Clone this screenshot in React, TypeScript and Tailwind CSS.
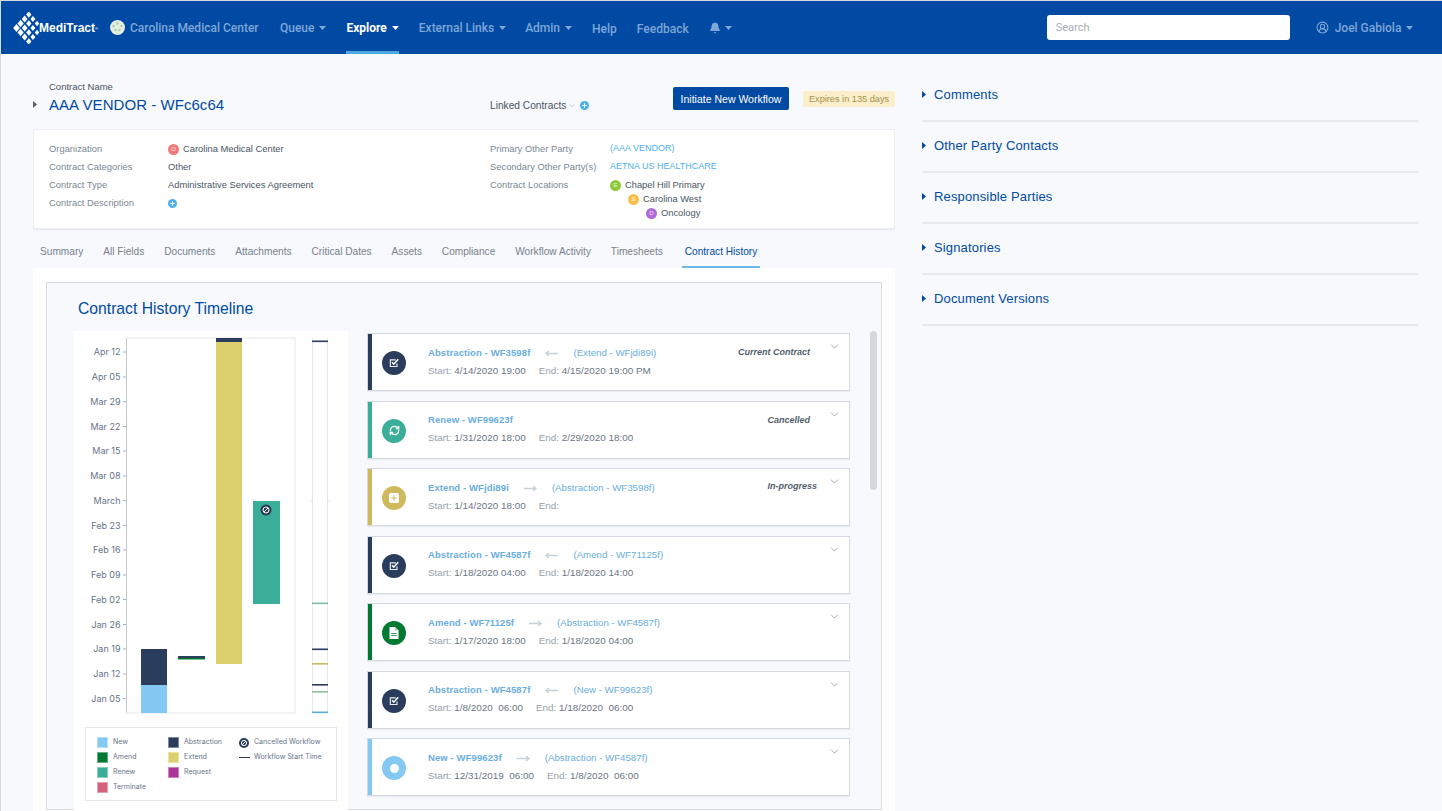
import React from 'react';
import { ChevronDown, Bell, CircleUserRound, RefreshCw, Plus } from 'lucide-react';

const Caret = ({ className = 'text-[#7ea6d8]' }: { className?: string }) => (
  <svg width="7" height="4" viewBox="0 0 7 4" className={className}>
    <path d="M0 0h7L3.5 4z" fill="currentColor" />
  </svg>
);

const SideCaret = ({ className = 'text-[#004aa3]' }: { className?: string }) => (
  <svg width="4" height="7" viewBox="0 0 4 7" className={className}>
    <path d="M0 0l4 3.5L0 7z" fill="currentColor" />
  </svg>
);

const Logo = () => {
  // diamond lattice of the MediTract mark
  const cells: [number, number][] = [
    [0, 0], [1, 0], [2, 0], [3, 0], [0, 1], [1, 1], [2, 1], [3, 1], [0, 2], [1, 2], [2, 2], [3, 2], [0, 3], [1, 3], [2, 3],
  ];
  return (
    <svg width="26" height="32" viewBox="0 0 26 32" className="shrink-0">
      {cells.map(([u, v], i) => {
        const x = 3.5 + (u + v) * 4.1;
        const y = 16 + (u - v) * 4.5;
        const r = 3.9 - (u + v) * 0.25;
        return <path key={i} d={`M${x} ${y - r}L${x + r * 0.85} ${y}L${x} ${y + r}L${x - r * 0.85} ${y}z`} fill="#fff" />;
      })}
    </svg>
  );
};

const CheckIcon = () => (
  <svg width="11" height="10" viewBox="0 0 13 12">
    <path d="M9.5 6.5V10.2H1.5V2.2H8" fill="none" stroke="#e8ecf2" strokeWidth="1.4" />
    <path d="M3.6 5.2L5.6 7.4L11 1.5" fill="none" stroke="#fff" strokeWidth="1.9" />
  </svg>
);

const DocIcon = () => (
  <svg width="10" height="12" viewBox="0 0 10 12">
    <path d="M0.5 0H6L9.5 3.5V12H0.5z" fill="#fff" />
    <path d="M6 0V3.5H9.5" fill="#a7d3b6" />
    <path d="M2.2 6.5H7.8M2.2 8.5H7.8" stroke="#3c9a60" strokeWidth="1" />
  </svg>
);

const NavItem = ({ label, active, caret = true, className = '' }: { label: string; active?: boolean; caret?: boolean; className?: string }) => (
  <div className={`relative h-full flex items-center gap-[5px] ${active ? 'text-white font-bold' : 'text-[#7ea6d8] font-medium'} ${className}`}>
    <span>{label}</span>
    {caret && <Caret className={active ? 'text-white' : 'text-[#7ea6d8]'} />}
    {active && <div className="absolute left-0 right-0 bottom-0 h-[3px] bg-[#4ea8e0]" />}
  </div>
);

const Badge = ({ letter, color }: { letter: string; color: string }) => (
  <span className={`w-[11px] h-[11px] rounded-full inline-flex items-center justify-center text-[6px] text-white/80 shrink-0 ${color}`}>{letter}</span>
);

const PlusDot = () => (
  <span className="w-[9px] h-[9px] rounded-full bg-[#4eb0ea] inline-flex items-center justify-center shrink-0">
    <Plus size={7} strokeWidth={3} className="text-white" />
  </span>
);

const ticks: [string, number][] = [
  ['Apr 12', 352], ['Apr 05', 377], ['Mar 29', 401.7], ['Mar 22', 426.5], ['Mar 15', 451], ['Mar 08', 476], ['March', 500.7],
  ['Feb 23', 525.5], ['Feb 16', 550], ['Feb 09', 575], ['Feb 02', 599.5], ['Jan 26', 624.5], ['Jan 19', 649], ['Jan 12', 674], ['Jan 05', 698.5],
];

const miniLines: [number, string][] = [
  [341.5, '#2a3d5c'], [603.5, '#7fbf9f'], [649.5, '#2a3d5c'], [664, '#d2bc62'], [685, '#2a3d5c'], [692, '#8cc49a'], [712.5, '#4eb0e0'],
];

const Chart = () => {
  const ox = 74;
  const oy = 331;
  return (
    <svg width="274" height="390" viewBox={`${ox} ${oy} 274 390`} className="block">
      <path d="M126.5 338V713" stroke="#c5c8ce" strokeWidth="1" />
      <path d="M126 338H295V713H126" fill="none" stroke="#e6e8ec" strokeWidth="1" />
      {ticks.map(([t, y]) => (
        <g key={t}>
          <path d={`M123 ${y}H126`} stroke="#aab0ba" />
          <text x="120.5" y={y + 3.3} textAnchor="end" fontSize="9" fill="#68748a" fontFamily="Inter, sans-serif">{t}</text>
        </g>
      ))}
      <rect x="141" y="685" width="26" height="28" fill="#83c9f4" />
      <rect x="141" y="649" width="26" height="36" fill="#2a3d5c" />
      <rect x="178" y="656" width="27" height="2" fill="#2a3d5c" />
      <rect x="178" y="658" width="27" height="1.5" fill="#007a33" />
      <rect x="216" y="338" width="26" height="326" fill="#dccf6e" />
      <rect x="216" y="338" width="26" height="4" fill="#2a3d5c" />
      <rect x="253" y="501" width="27" height="103" fill="#3aae98" />
      <circle cx="266" cy="510" r="5.5" fill="#2a3d5c" />
      <circle cx="266" cy="510" r="3" fill="none" stroke="#fff" strokeWidth="1" />
      <path d="M264 512L268 508" stroke="#fff" strokeWidth="1" />
      <path d="M312.5 338V713M327.5 338V713" stroke="#e6e8ec" />
      {miniLines.map(([y, c]) => (
        <rect key={y} x="312" y={y - 1} width="16" height="1.6" fill={c} />
      ))}
      <path d="M312 500.5V502M328 500.5V502" stroke="#c5c8ce" />
    </svg>
  );
};

const Swatch = ({ color, label }: { color: string; label: string }) => (
  <div className="flex items-center gap-[5px] h-[15px]">
    <span className={`w-[11px] h-[11px] border border-white/40 ${color}`} />
    <span>{label}</span>
  </div>
);

const Legend = () => (
  <div className="mx-[11px] mt-[6px] h-[74px] bg-white border border-[#e3e6ea] pl-[11px] pt-[7px] flex text-[7px] text-[#68748a] font-['Inter',sans-serif]">
    <div className="w-[71px]">
      <Swatch color="bg-[#83c9f4]" label="New" />
      <Swatch color="bg-[#007a33]" label="Amend" />
      <Swatch color="bg-[#3aae98]" label="Renew" />
      <Swatch color="bg-[#d2637a]" label="Terminate" />
    </div>
    <div className="w-[71px]">
      <Swatch color="bg-[#2a3d5c]" label="Abstraction" />
      <Swatch color="bg-[#dccf6e]" label="Extend" />
      <Swatch color="bg-[#ae3398]" label="Request" />
    </div>
    <div>
      <div className="flex items-center gap-[5px] h-[15px]">
        <svg width="10" height="10" viewBox="0 0 10 10">
          <circle cx="5" cy="5" r="5" fill="#2a3d5c" />
          <circle cx="5" cy="5" r="2.6" fill="none" stroke="#fff" strokeWidth="1" />
          <path d="M3.2 6.8L6.8 3.2" stroke="#fff" strokeWidth="1" />
        </svg>
        <span>Cancelled Workflow</span>
      </div>
      <div className="flex items-center gap-[4px] h-[15px]">
        <span className="w-[11px] h-[1.5px] bg-[#2a3d5c]" />
        <span>Workflow Start Time</span>
      </div>
    </div>
  </div>
);

type Item = {
  bar: string;
  icon: React.ReactNode;
  title: string;
  arrow?: 'left' | 'right';
  link?: string;
  start: string;
  end: string;
  status?: string;
  statusCls?: string;
};

const items: Item[] = [
  { bar: 'bg-[#2a3d5c]', icon: <CheckIcon />, title: 'Abstraction - WF3598f', arrow: 'left', link: '(Extend - WFjdi89i)', start: '4/14/2020 19:00', end: '4/15/2020 19:00 PM', status: 'Current Contract', statusCls: 'right-[39px] top-[12px]' },
  { bar: 'bg-[#3aae98]', icon: <RefreshCw size={11} strokeWidth={3} className="text-white" />, title: 'Renew - WF99623f', start: '1/31/2020 18:00', end: '2/29/2020 18:00', status: 'Cancelled', statusCls: 'right-[39px] top-[12px]' },
  { bar: 'bg-[#cfb95c]', icon: <span className="w-[10px] h-[10px] rounded-[2px] bg-white flex items-center justify-center"><Plus size={8} strokeWidth={3} className="text-[#cfb95c]" /></span>, title: 'Extend - WFjdi89i', arrow: 'right', link: '(Abstraction - WF3598f)', start: '1/14/2020 18:00', end: '', status: 'In-progress', statusCls: 'right-[32px] top-[11px]' },
  { bar: 'bg-[#2a3d5c]', icon: <CheckIcon />, title: 'Abstraction - WF4587f', arrow: 'left', link: '(Amend - WF71125f)', start: '1/18/2020 04:00', end: '1/18/2020 14:00' },
  { bar: 'bg-[#007a33]', icon: <DocIcon />, title: 'Amend - WF71125f', arrow: 'right', link: '(Abstraction - WF4587f)', start: '1/17/2020 18:00', end: '1/18/2020 04:00' },
  { bar: 'bg-[#2a3d5c]', icon: <CheckIcon />, title: 'Abstraction - WF4587f', arrow: 'left', link: '(New - WF99623f)', start: '1/8/2020  06:00', end: '1/18/2020  06:00' },
  { bar: 'bg-[#83c9f4]', icon: <span className="w-[9px] h-[9px] rounded-full bg-white" />, title: 'New - WF99623f', arrow: 'right', link: '(Abstraction - WF4587f)', start: '12/31/2019  06:00', end: '1/8/2020  06:00' },
];

const Arrow = ({ dir }: { dir: 'left' | 'right' }) => (
  <svg width="13" height="7" viewBox="0 0 13 7" className="mx-[15px] text-[#c9cfd8]">
    {dir === 'left'
      ? <path d="M13 3.5H1M4 1L1 3.5L4 6" stroke="currentColor" strokeWidth="1.3" fill="none" />
      : <path d="M0 3.5H12M9 1L12 3.5L9 6" stroke="currentColor" strokeWidth="1.3" fill="none" />}
  </svg>
);

const Card = ({ it }: { it: Item }) => (
  <div className="relative h-[58px] bg-white border border-[#d5dae2] flex items-center shrink-0 shadow-[0_1px_1px_rgba(0,0,0,0.05)]">
    <div className={`w-[4px] self-stretch ${it.bar}`} />
    <div className={`ml-[10px] mt-[2px] w-[24px] h-[24px] rounded-full flex items-center justify-center ${it.bar}`}>{it.icon}</div>
    <div className="ml-[22px] flex flex-col gap-[6px]">
      <div className="flex items-center h-[12px]">
        <span className="font-bold text-[9.5px] text-[#6aaee0] tracking-[0.1px]">{it.title}</span>
        {it.arrow && <Arrow dir={it.arrow} />}
        {it.link && <span className="text-[9.7px] text-[#6aaee0]">{it.link}</span>}
      </div>
      <div className="flex h-[12px] items-center text-[9.9px] text-[#6b7684] whitespace-pre">
        <span><span className="text-[#98a1ab]">Start: </span>{it.start}</span>
        <span className="ml-[13px]"><span className="text-[#98a1ab]">End: </span>{it.end}</span>
      </div>
    </div>
    {it.status && (
      <span className={`absolute text-[9px] italic font-bold text-[#55606c] ${it.statusCls}`}>{it.status}</span>
    )}
    <ChevronDown size={13} strokeWidth={1} className="absolute right-[8px] top-[6px] text-[#55606c]" />
  </div>
);

const InfoRow = ({ label, children, h = 'h-[18px]' }: { label: string; children: React.ReactNode; h?: string }) => (
  <div className={`flex items-center ${h}`}>
    <span className="w-[119px] text-[#7b8794] shrink-0">{label}</span>
    {children}
  </div>
);

const sections = ['Comments', 'Other Party Contacts', 'Responsible Parties', 'Signatories', 'Document Versions'];
const tabs = ['Summary', 'All Fields', 'Documents', 'Attachments', 'Critical Dates', 'Assets', 'Compliance', 'Workflow Activity', 'Timesheets'];

export default function App() {
  return (
    <div className="w-[1442px] h-[811px] overflow-hidden bg-[#f8f9fd] font-['Liberation_Sans',sans-serif] border-t border-l border-[#d8dadf]">
      {/* top bar */}
      <header className="h-[53px] bg-[#004aa3] flex items-center pl-[12px] text-[12px] font-['Roboto',sans-serif]">
        <Logo />
        <span className="text-[12px] font-bold text-white font-['Liberation_Sans',sans-serif] w-[71px] whitespace-nowrap">MediTract<sup className="text-[4px]">®</sup></span>
        <svg width="15" height="15" viewBox="0 0 15 15">
          <circle cx="7.5" cy="7.5" r="7.5" fill="#e6ece6" />
          <circle cx="7.5" cy="3.5" r="1.2" fill="#a9cf9c" /><circle cx="3.5" cy="6" r="1.2" fill="#a9cf9c" /><circle cx="11.5" cy="6" r="1.2" fill="#a9cf9c" />
          <circle cx="5.5" cy="10" r="1.2" fill="#a9cf9c" /><circle cx="9.5" cy="10" r="1.2" fill="#a9cf9c" />
        </svg>
        <div className="ml-[5px] w-[130px] font-medium text-[#7ea6d8] whitespace-nowrap">Carolina Medical Center</div>
        <NavItem label="Queue" className="ml-[20px]" />
        <NavItem label="Explore" active className="ml-[20px]" />
        <NavItem label="External Links" className="ml-[20px]" />
        <NavItem label="Admin" className="ml-[19px]" />
        <NavItem label="Help" caret={false} className="ml-[20px] pt-[2px]" />
        <NavItem label="Feedback" caret={false} className="ml-[20px] pt-[2px]" />
        <div className="ml-[20px] flex items-center gap-[4px] text-[#7ea6d8]">
          <Bell size={12} fill="currentColor" />
          <Caret />
        </div>
        <div className="ml-[315px] w-[243px] h-[25px] bg-white rounded-[3px] flex items-center pl-[9px] pt-[2px] text-[11px] text-[#a8adb5] font-normal">Search</div>
        <CircleUserRound size={13} className="ml-[26px] text-[#7ea6d8]" />
        <span className="ml-[6px] text-[#7ea6d8] font-medium">Joel Gabiola</span>
        <Caret className="ml-[5px] text-[#7ea6d8]" />
      </header>

      <div className="flex items-start">
        {/* main column */}
        <div className="ml-[32px] w-[862px] shrink-0">
          <div className="relative h-[75px] flex">
            <div className="ml-[16px] pt-[27px]">
              <div className="text-[9.5px] text-[#4a5563] leading-[12px]">Contract Name</div>
              <div className="mt-[2px] text-[15px] text-[#004aa3] leading-[20px] tracking-[0.05px] whitespace-nowrap">AAA VENDOR - WFc6c64</div>
            </div>
            <SideCaret className="absolute left-0 top-[47px] text-[#55606c]" />
            <div className="absolute left-[457px] top-[44px] flex items-center gap-[2px] text-[10.2px] text-[#4a5563] whitespace-nowrap">
              Linked Contracts
              <ChevronDown size={8} className="text-[#b6bcc5]" />
              <span className="ml-[2px] flex"><PlusDot /></span>
            </div>
            <div className="absolute left-[640px] top-[33px] w-[116px] h-[23px] pt-[2px] bg-[#004aa3] rounded-[2px] text-white text-[10.5px] flex items-center justify-center">Initiate New Workflow</div>
            <div className="absolute left-[770px] top-[37px] w-[92px] h-[16px] pt-[2px] bg-[#faeecb] rounded-[2px] text-[#a8914a] text-[9.2px] flex items-center justify-center">Expires in 135 days</div>
          </div>

          <div className="h-[100px] bg-white rounded-[2px] border border-[#eceef2] shadow-[0_1px_1px_rgba(0,0,0,0.08)] flex pt-[10px] pl-[15px] text-[9.4px] text-[#4a5563]">
            <div className="w-[441px]">
              <InfoRow label="Organization">
                <Badge letter="O" color="bg-[#ef7a7a]" />
                <span className="ml-[4px]">Carolina Medical Center</span>
              </InfoRow>
              <InfoRow label="Contract Categories"><span>Other</span></InfoRow>
              <InfoRow label="Contract Type"><span>Administrative Services Agreement</span></InfoRow>
              <InfoRow label="Contract Description"><PlusDot /></InfoRow>
            </div>
            <div>
              <InfoRow label="Primary Other Party"><span className="ml-[1px] text-[9px] text-[#4eb0ea]">(AAA VENDOR)</span></InfoRow>
              <InfoRow label="Secondary Other Party(s)"><span className="ml-[1px] text-[9px] text-[#4eb0ea]">AETNA US HEALTHCARE</span></InfoRow>
              <div className="flex items-start h-[18px]">
                <span className="w-[119px] leading-[18px] text-[#7b8794] shrink-0">Contract Locations</span>
                <div className="ml-[1px] text-[9.3px] leading-[14px] pt-[2px]">
                  <div className="flex items-center gap-[4px]"><Badge letter="E" color="bg-[#8fc93a]" />Chapel Hill Primary</div>
                  <div className="flex items-center gap-[4px] ml-[18px]"><Badge letter="S" color="bg-[#fbbe4e]" />Carolina West</div>
                  <div className="flex items-center gap-[4px] ml-[36px]"><Badge letter="D" color="bg-[#b06ad8]" />Oncology</div>
                </div>
              </div>
            </div>
          </div>

          {/* tabs */}
          <div className="h-[39px] pl-[7px] pt-[6px] flex items-center gap-[19.9px] text-[10.15px] text-[#77818c] whitespace-nowrap">
            {tabs.map(t => <span key={t}>{t}</span>)}
            <span className="relative text-[#004aa3] h-full flex items-center ml-[2px]">
              Contract History
              <span className="absolute -left-[3px] -right-[3px] bottom-0 h-[2px] bg-[#6cb8ea]" />
            </span>
          </div>

          {/* history panel */}
          <div className="bg-white h-[600px] pt-[14px] px-[13px]">
            <div className="h-[528px] bg-[#f8f9fd] border border-[#d5dce3]">
              <h2 className="pl-[31px] pt-[16px] h-[48px] text-[15.7px] leading-[19px] text-[#004aa3]">Contract History Timeline</h2>
              <div className="flex items-start">
                <div className="ml-[27px] w-[274px] h-[480px] bg-white shrink-0">
                  <Chart />
                  <Legend />
                </div>
                <div className="ml-[19px] w-[483px] flex flex-col gap-[9.5px] pt-[2px] shrink-0">
                  {items.map((it, i) => <Card key={i} it={it} />)}
                </div>
                <div className="ml-[20px] w-[7px] h-[159px] rounded-full bg-[#d3d8df] shrink-0" />
              </div>
            </div>
          </div>
        </div>

        {/* right column */}
        <aside className="ml-[27px] w-[496px] shrink-0 pt-[17px]">
          {sections.map(s => (
            <div key={s} className="h-[51px] border-b-2 border-[#e8eaee] flex items-center gap-[8px] pb-[2px]">
              <SideCaret />
              <span className="text-[13px] text-[#004aa3] tracking-[0.15px]">{s}</span>
            </div>
          ))}
        </aside>
      </div>
    </div>
  );
}
